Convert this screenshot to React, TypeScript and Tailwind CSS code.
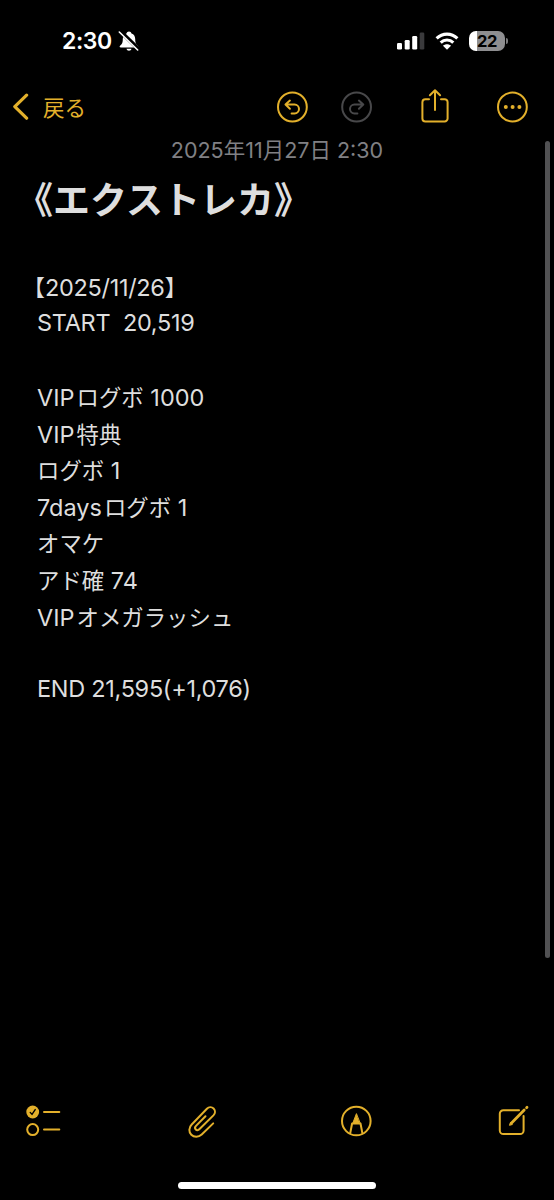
import type { ReactNode } from 'react';

interface Segment {
  text: string;
  className: string;
}

const LATIN = "font-['Inter','Noto_Sans_CJK_JP',sans-serif] text-[23.5px] whitespace-pre";
const KANA = "font-['Noto_Sans_CJK_JP',sans-serif] text-[22.4px] whitespace-pre";

const lines: Segment[][] = [
  [
    { text: '【', className: `${KANA} -ml-[14.5px]` },
    { text: '2025/11/26', className: `${LATIN} tracking-[-0.3px]` },
    { text: '】', className: KANA },
  ],
  [{ text: 'START  20,519', className: `${LATIN} tracking-[-0.3px]` }],
  [],
  [
    { text: 'VIP', className: `${LATIN} mr-0.5` },
    { text: 'ログボ', className: KANA },
    { text: ' 1000', className: LATIN },
  ],
  [
    { text: 'VIP', className: `${LATIN} mr-0.5` },
    { text: '特典', className: KANA },
  ],
  [
    { text: 'ログボ', className: KANA },
    { text: ' 1', className: LATIN },
  ],
  [
    { text: '7days', className: `${LATIN} mr-0.5` },
    { text: 'ログボ', className: KANA },
    { text: ' 1', className: LATIN },
  ],
  [{ text: 'オマケ', className: KANA }],
  [
    { text: 'アド確', className: KANA },
    { text: ' 74', className: LATIN },
  ],
  [
    { text: 'VIP', className: `${LATIN} mr-0.5` },
    { text: 'オメガラッシュ', className: KANA },
  ],
  [],
  [{ text: 'END 21,595(+1,076)', className: `${LATIN} tracking-[-0.3px]` }],
];

function Icon({ className = '', children }: { className?: string; children: ReactNode }) {
  return (
    <svg
      viewBox="0 0 36 40"
      className={`h-10 w-9 shrink-0 ${className}`}
      fill="none"
      stroke="currentColor"
      strokeWidth="2"
      strokeLinecap="round"
      strokeLinejoin="round"
    >
      {children}
    </svg>
  );
}

function StatusBar() {
  return (
    <header className="flex h-[82px] items-center pl-[62px] text-white">
      <span className="w-[56px] font-['Inter',sans-serif] text-[23px] font-semibold leading-none tracking-[-0.4px]">
        2:30
      </span>
      <svg viewBox="0 0 22 22" className="h-[22px] w-[22px]">
        <path
          d="M11 1.5c-1.3 0-2.2.8-2.5 2C6 4.4 4.8 6.3 4.8 9c0 4-1 5.2-2.5 6.6-1.2 1.1-.7 2 .6 2h16.2c1.3 0 1.8-.9.6-2-1.5-1.4-2.5-2.6-2.5-6.6 0-2.7-1.2-4.6-3.7-5.5-.3-1.2-1.2-2-2.5-2ZM8.5 18.7c.2 1.3 1.2 2 2.5 2s2.3-.7 2.5-2Z"
          fill="currentColor"
        />
        <path d="M2.3 1.3 20.5 19" stroke="#000" strokeWidth="4" />
        <path d="M1.3 2 19.7 20" stroke="currentColor" strokeWidth="1.6" strokeLinecap="round" />
      </svg>
      <svg viewBox="0 0 28 20" className="ml-[257px] h-5 w-7" fill="currentColor">
        <rect x="0" y="12" width="5" height="6.5" rx="1.3" />
        <rect x="7.7" y="9" width="5" height="9.5" rx="1.3" />
        <rect x="15.2" y="5" width="5" height="13.5" rx="1.3" />
        <rect x="22.7" y="1.5" width="4.6" height="17" rx="1.3" fill="#3a3a3c" />
      </svg>
      <svg viewBox="0 0 24 20" className="ml-[10px] h-5 w-6" fill="none" stroke="currentColor" strokeWidth="3.1">
        <path d="M1.6 7.4C7.5 1.7 16.5 1.7 22.4 7.4" />
        <path d="M5.7 11.6c3.5-3.4 9.1-3.4 12.6 0" />
        <path d="M12 18.7 8 14.8c2.2-2 5.8-2 8 0Z" fill="currentColor" stroke="none" />
      </svg>
      <div className="ml-[10px] flex items-center gap-px">
        <div className="flex h-5 w-[36px] items-center justify-center rounded-[7px] bg-[linear-gradient(90deg,#fff_22%,#8e8e90_22%)]">
          <span className="pl-0 font-['Inter',sans-serif] text-[16.5px] font-bold leading-none tracking-[-0.5px] text-black">
            22
          </span>
        </div>
        <div className="h-1.5 w-0.5 rounded-r-full bg-[#7a7a7c]" />
      </div>
    </header>
  );
}

function NavBar() {
  return (
    <nav className="flex h-[50px] items-center text-[#e3b02b]">
      <svg viewBox="0 0 18 28" className="ml-[12px] h-7 w-[18px]" fill="none" stroke="currentColor" strokeWidth="3.2" strokeLinecap="round" strokeLinejoin="round">
        <path d="M14.6 2.2 2.8 13.6 14.6 25.2" />
      </svg>
      <span className="ml-[13px] w-[46px] whitespace-nowrap font-['Noto_Sans_CJK_JP',sans-serif] text-[21.5px] leading-none">
        戻る
      </span>
      <Icon className="ml-[185px]">
        <circle cx="18.4" cy="20" r="14.4" />
        <path d="M15.9 13.6 11.5 17.6l4.4 4.1M12 17.6h8.6a4.4 4.4 0 0 1 0 8.8h-3" />
      </Icon>
      <Icon className="ml-7 text-[#48484a]">
        <circle cx="18.6" cy="20" r="14.4" />
        <path d="M20.9 13.6l4.4 4-4.4 4.1M24.8 17.6h-8.4a4.4 4.4 0 0 0 0 8.8h3" />
      </Icon>
      <Icon className="ml-[43px]">
        <path d="M12 12.2H8.4a3 3 0 0 0-3 3v16.2a3 3 0 0 0 3 3h19.2a3 3 0 0 0 3-3V15.2a3 3 0 0 0-3-3H24" />
        <path d="M18 23V3.3M12.9 8.2 18 3.2l5.1 5" />
      </Icon>
      <Icon className="ml-[42px]">
        <circle cx="17.4" cy="20" r="14.4" />
        <g fill="currentColor" stroke="none">
          <circle cx="10.8" cy="20" r="2" />
          <circle cx="17.6" cy="20" r="2" />
          <circle cx="24.4" cy="20" r="2" />
        </g>
      </Icon>
    </nav>
  );
}

function Toolbar() {
  return (
    <footer className="flex h-10 items-center text-[#e3b02b]">
      <Icon className="ml-[25px]">
        <circle cx="7.7" cy="11" r="6.4" fill="currentColor" stroke="none" />
        <path d="m5.2 11.4 1.8 2 3.2-4.8" stroke="#000" strokeWidth="1.4" />
        <path d="M19 11h15.3M19 28.6h15.3" />
        <circle cx="7.7" cy="28.6" r="5.5" />
      </Icon>
      <Icon className="ml-[122px]">
        <path d="M31.2 22.4 19.7 33.5c-3.2 3-7.8 2.8-10.4.2-2.7-2.8-2.6-7.2.4-10.2L24.9 7.8c2-2 4.9-2 6.7-.3 1.9 1.9 1.8 4.8-.2 6.9L17.3 28.3c-1.1 1.1-2.6 1.1-3.5.2-1-1-.9-2.5.2-3.6L23.5 15.3" transform="translate(-1 0)" />
      </Icon>
      <Icon className="ml-[119px]">
        <circle cx="18.3" cy="20" r="14.3" />
        <path d="m12.2 32.3 1.9-9.8h8.4l1.9 9.8" />
        <path d="m18.3 13-3.6 9.4h7.2Z" fill="currentColor" strokeWidth="1" />
      </Icon>
      <Icon className="ml-[120px]">
        <path d="M25 9.2H9.4a3.6 3.6 0 0 0-3.6 3.6v16.6A3.6 3.6 0 0 0 9.4 33H26a3.6 3.6 0 0 0 3.6-3.6V15" />
        <path d="M17.3 22.2 30.2 9" strokeWidth="2.8" />
        <path d="m15.6 24 .8-2.5 1.7 1.7Z" fill="currentColor" strokeWidth="1" />
        <path d="m32.6 6.7.4-.4" strokeWidth="2.8" />
      </Icon>
    </footer>
  );
}

export default function App() {
  return (
    <div className="flex h-[1200px] w-[554px] flex-col overflow-hidden bg-black">
      <StatusBar />
      <NavBar />
      <main className="flex h-[969px]">
        <div className="w-[545px] text-[#dedede]">
          <div className="flex h-[37px] items-center justify-center whitespace-pre pl-[9px] font-['Inter','Noto_Sans_CJK_JP',sans-serif] text-[21.5px] leading-none text-[#808084]">
            2025年11月27日 2:30
          </div>
          <h1 className="flex h-[58px] items-center whitespace-nowrap pl-[16px] font-['Noto_Sans_CJK_JP',sans-serif] text-[37px] font-bold leading-none">
            《エクストレカ》
          </h1>
          <div className="mt-[41px] pl-[37px]">
            {lines.map((line, i) => (
              <p key={i} className="flex h-[36.64px] items-baseline leading-[36.64px]">
                {line.map((segment, j) => (
                  <span key={j} className={segment.className}>
                    {segment.text}
                  </span>
                ))}
              </p>
            ))}
          </div>
        </div>
        <div className="mt-[9px] h-[817px] w-[5px] rounded-full bg-[#515153]" />
      </main>
      <Toolbar />
      <div className="mx-auto mt-[41px] h-[7px] w-[198px] rounded-full bg-white" />
    </div>
  );
}
